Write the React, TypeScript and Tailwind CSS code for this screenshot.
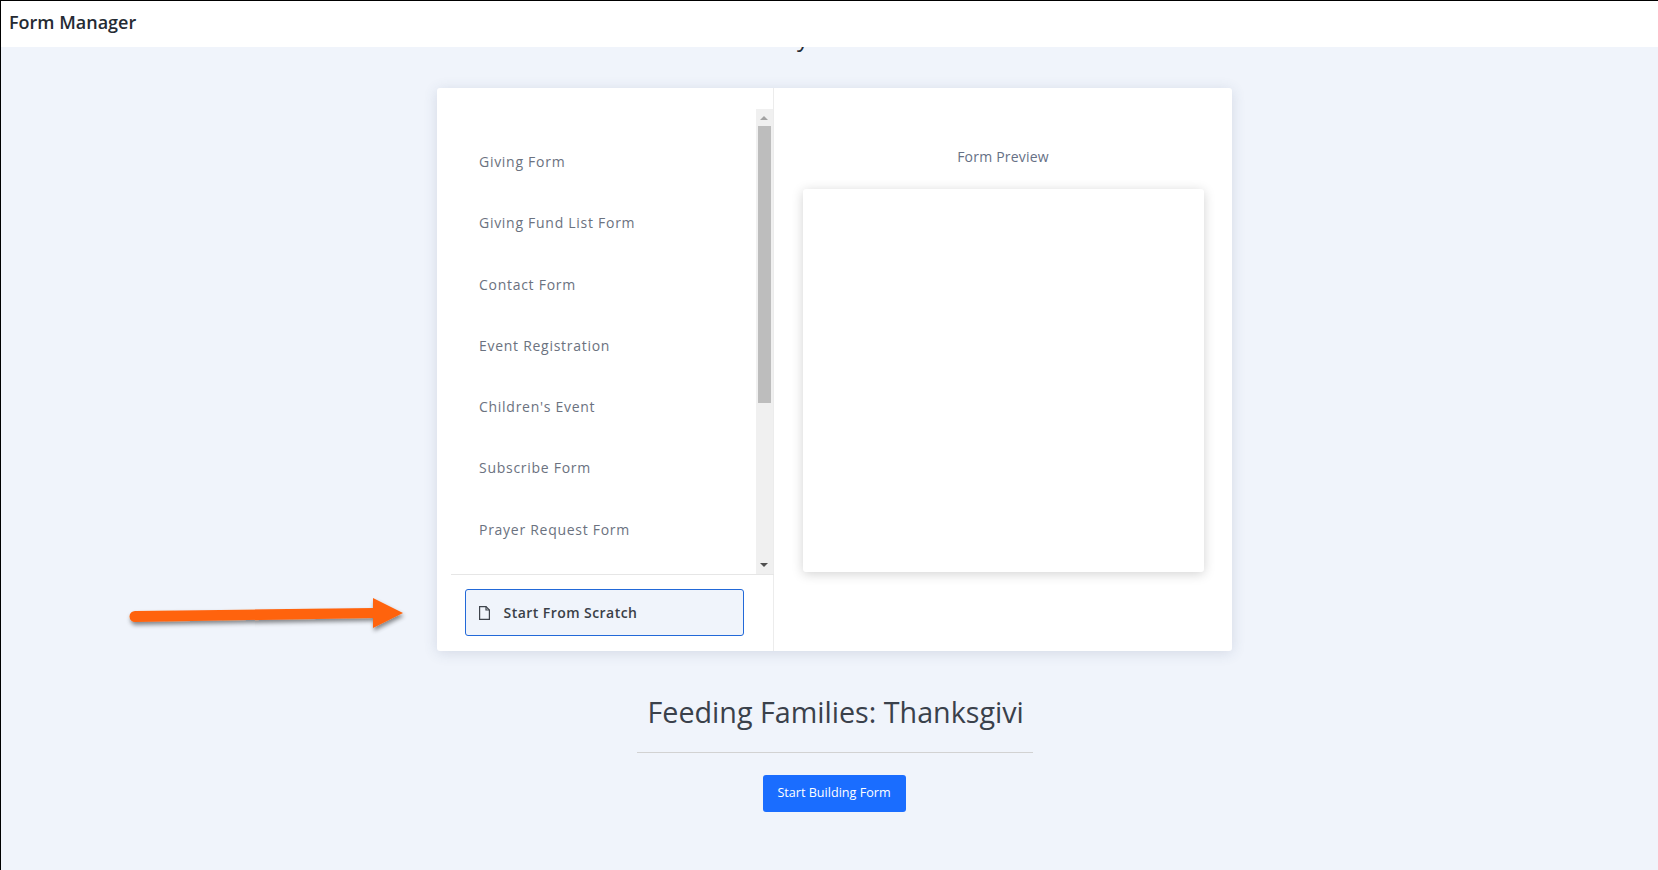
const forms = [
  "Giving Form",
  "Giving Fund List Form",
  "Contact Form",
  "Event Registration",
  "Children's Event",
  "Subscribe Form",
  "Prayer Request Form",
];

function ScrollBar() {
  return (
    <div className="flex h-[465px] w-[17px] flex-col items-center bg-[#f0f0f0]">
      <div className="flex h-[17px] w-full items-center justify-center">
        <div className="h-0 w-0 border-x-[4px] border-b-[4px] border-x-transparent border-b-[#a3a3a3]" />
      </div>
      <div className="h-[277px] w-[13px] bg-[#bdbdbd]" />
      <div className="flex-1" />
      <div className="flex h-[17px] w-full items-center justify-center pb-[2px]">
        <div className="h-0 w-0 border-x-[4px] border-t-[4px] border-x-transparent border-t-[#505050]" />
      </div>
    </div>
  );
}

function FileIcon() {
  return (
    <svg width="11" height="14" viewBox="0 0 11 14" fill="none" stroke="#3f444c" strokeWidth="1.2">
      <path d="M0.6 0.6 H7 L10.4 4 V13.4 H0.6 Z" />
      <path d="M7 0.6 V4 H10.4" />
    </svg>
  );
}

function Arrow() {
  return (
    <svg className="absolute left-[123px] top-[592px]" width="290" height="48" viewBox="0 0 290 48">
      <defs>
        <filter id="arrow-shadow" x="-5%" y="-30%" width="110%" height="170%">
          <feDropShadow dx="1" dy="3" stdDeviation="2" floodColor="#000" floodOpacity="0.45" />
        </filter>
      </defs>
      <path
        d="M11 18 L249 15 L249 5 L279 20 L249 35 L249 25 L11 29 A5.5 5.5 0 0 1 11 18 Z"
        fill="#ff640f"
        filter="url(#arrow-shadow)"
      />
    </svg>
  );
}

export default function App() {
  return (
    <div className="relative h-[870px] w-full overflow-hidden border-l border-t border-black bg-[#f0f4fb] font-['Open_Sans',sans-serif]">
      <header className="relative z-10 flex h-[46px] items-center bg-white pb-[3px] pl-2 text-[18px] font-semibold text-[#252b33]">
        Form Manager
      </header>
      <span className="absolute left-[796px] top-[20px] text-[24px] leading-[32px] text-[#252b33]">y</span>

      <main className="flex flex-col items-center pl-[10px] pr-[1px] pt-[41px]">
        <div className="flex h-[563px] w-[795px] rounded-[3px] bg-white shadow-[0_2px_14px_rgba(60,80,120,0.16)]">
          <div className="flex w-[337px] flex-col border-r border-[#ececec]">
            <div className="flex pl-[14px] pt-[21px]">
              <div className="flex h-[465px] flex-1 flex-col gap-[41.3px] pl-[28.5px] pt-[43px]">
                {forms.map((name) => (
                  <div key={name} className="text-[14px] leading-[20px] tracking-[0.72px] text-[#6b7280]">
                    {name}
                  </div>
                ))}
              </div>
              <ScrollBar />
            </div>
            <div className="ml-[14px] mr-[-1px] border-t border-[#e6e6e6] pl-[14px] pr-[29px] pt-[14px]">
              <button
                type="button"
                className="flex h-[47px] w-[279px] items-center gap-[14px] rounded-[3px] border border-[#2269d8] bg-[#f0f4fb] pl-[13px] text-[14px] font-semibold tracking-[0.45px] text-[#3a3f47]"
              >
                <FileIcon />
                Start From Scratch
              </button>
            </div>
          </div>

          <div className="flex flex-1 flex-col items-center pl-[1px] pt-[59px]">
            <div className="text-[14px] leading-[20px] tracking-[0.2px] text-[#667085]">Form Preview</div>
            <div className="mt-[22px] h-[383px] w-[401px] rounded-[3px] bg-white shadow-[0_2px_12px_rgba(0,0,0,0.18)]" />
          </div>
        </div>

        <div className="ml-[1px] mt-[38px] w-[396px] border-b border-[#d2d2d2] pb-[18px] pl-[11px] pr-[4px]">
          <div className="whitespace-nowrap text-[28.7px] leading-[45px] text-[#3a414b]">
            Feeding Families: Thanksgivi
          </div>
        </div>

        <button
          type="button"
          className="mt-[22px] h-[37px] w-[143px] rounded-[3px] bg-[#1a6dff] text-[12.6px] text-white"
        >
          Start Building Form
        </button>
      </main>

      <Arrow />
    </div>
  );
}
